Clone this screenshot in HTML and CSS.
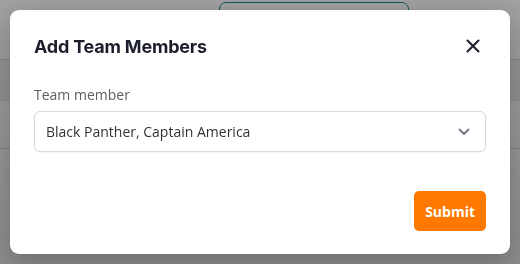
FILE: index.html
```html
<!DOCTYPE html>
<html lang="en">
<head>
  <meta charset="UTF-8" />
  <meta name="viewport" content="width=device-width, initial-scale=1.0"/>
  <title>Add Team Members</title>
  <link rel="stylesheet" href="styles.css">
</head>
<body>

  <div class="page">
    <div class="toolbar">
      <button class="outline-btn"></button>
    </div>
    <div class="table">
      <div class="table-head"></div>
      <div class="table-row"></div>
    </div>
  </div>

  <div class="overlay">
    <div class="modal">
      <div class="modal-header">
        <h2>Add Team Members</h2>
        <button class="close-btn" aria-label="Close">
          <svg width="14" height="14" viewBox="0 0 14 14">
            <path d="M1.5 1.5 L12.5 12.5 M12.5 1.5 L1.5 12.5" stroke="#1c1f2b" stroke-width="2" stroke-linecap="round"/>
          </svg>
        </button>
      </div>

      <label class="field-label">Team member</label>
      <div class="select">
        <span>Black Panther, Captain America</span>
        <svg width="12" height="8" viewBox="0 0 12 8">
          <path d="M1.5 1.5 L6 6 L10.5 1.5" fill="none" stroke="#6f7480" stroke-width="1.8" stroke-linecap="round" stroke-linejoin="round"/>
        </svg>
      </div>

      <div class="modal-footer">
        <button class="submit-btn">Submit</button>
      </div>
    </div>
  </div>

</body>
</html>
```

FILE: styles.css
```css
body {
  margin: 0;
  font-family: 'Open Sans', sans-serif;
  background-color: #f4f5f7;
  width: 520px;
  height: 264px;
  overflow: hidden;
}

.page {
  height: 264px;
  background: #ffffff;
}

.toolbar {
  height: 60px;
  display: flex;
  padding-left: 219px;
  box-sizing: border-box;
  border-bottom: 1px solid #d8d8d8;
}

.outline-btn {
  margin-top: 2px;
  width: 190px;
  height: 40px;
  background: #fff;
  border: 1.5px solid #138a96;
  border-radius: 7px;
}

.table-head {
  height: 40px;
  background: #f0f0f0;
  border-bottom: 1px solid #e4e4e4;
}

.table-row {
  height: 47px;
  border-bottom: 1px solid #dcdcdc;
}

.overlay {
  position: fixed;
  inset: 0;
  background: linear-gradient(rgba(0,0,0,0.37), rgba(0,0,0,0.45));
  padding: 10px;
  box-sizing: border-box;
}

.modal {
  height: 244px;
  background: #fff;
  border-radius: 9px;
  padding: 24px;
  box-sizing: border-box;
  display: flex;
  flex-direction: column;
  box-shadow: 0 8px 30px rgba(0,0,0,0.25);
}

.modal-header {
  display: flex;
  justify-content: space-between;
  align-items: center;
  height: 24px;
}

.modal-header h2 {
  margin: 0;
  font-family: 'Inter', sans-serif;
  font-weight: 650;
  font-size: 18px;
  letter-spacing: -0.2px;
  color: #1c1f2b;
}

.close-btn {
  border: none;
  background: none;
  padding: 0;
  margin-right: 6px;
  display: flex;
  cursor: pointer;
}

.field-label {
  margin-top: 27px;
  font-size: 14px;
  line-height: 20px;
  color: #5b5f66;
}

.select {
  margin-top: 6px;
  height: 41px;
  border: 1px solid #d9d9d9;
  border-radius: 6px;
  box-sizing: border-box;
  display: flex;
  align-items: center;
  justify-content: space-between;
  padding: 0 15px 0 11px;
  font-size: 14px;
  color: #333;
  box-shadow: 0 1px 2px rgba(0,0,0,0.06);
}

.modal-footer {
  margin-top: auto;
  display: flex;
  justify-content: flex-end;
}

.submit-btn {
  height: 40px;
  margin-bottom: -1px;
  padding: 0 11px;
  border: none;
  border-radius: 5px;
  background: #ff7800;
  color: #fff;
  font-family: 'Open Sans', sans-serif;
  font-weight: 700;
  font-size: 14px;
  cursor: pointer;
}
```
